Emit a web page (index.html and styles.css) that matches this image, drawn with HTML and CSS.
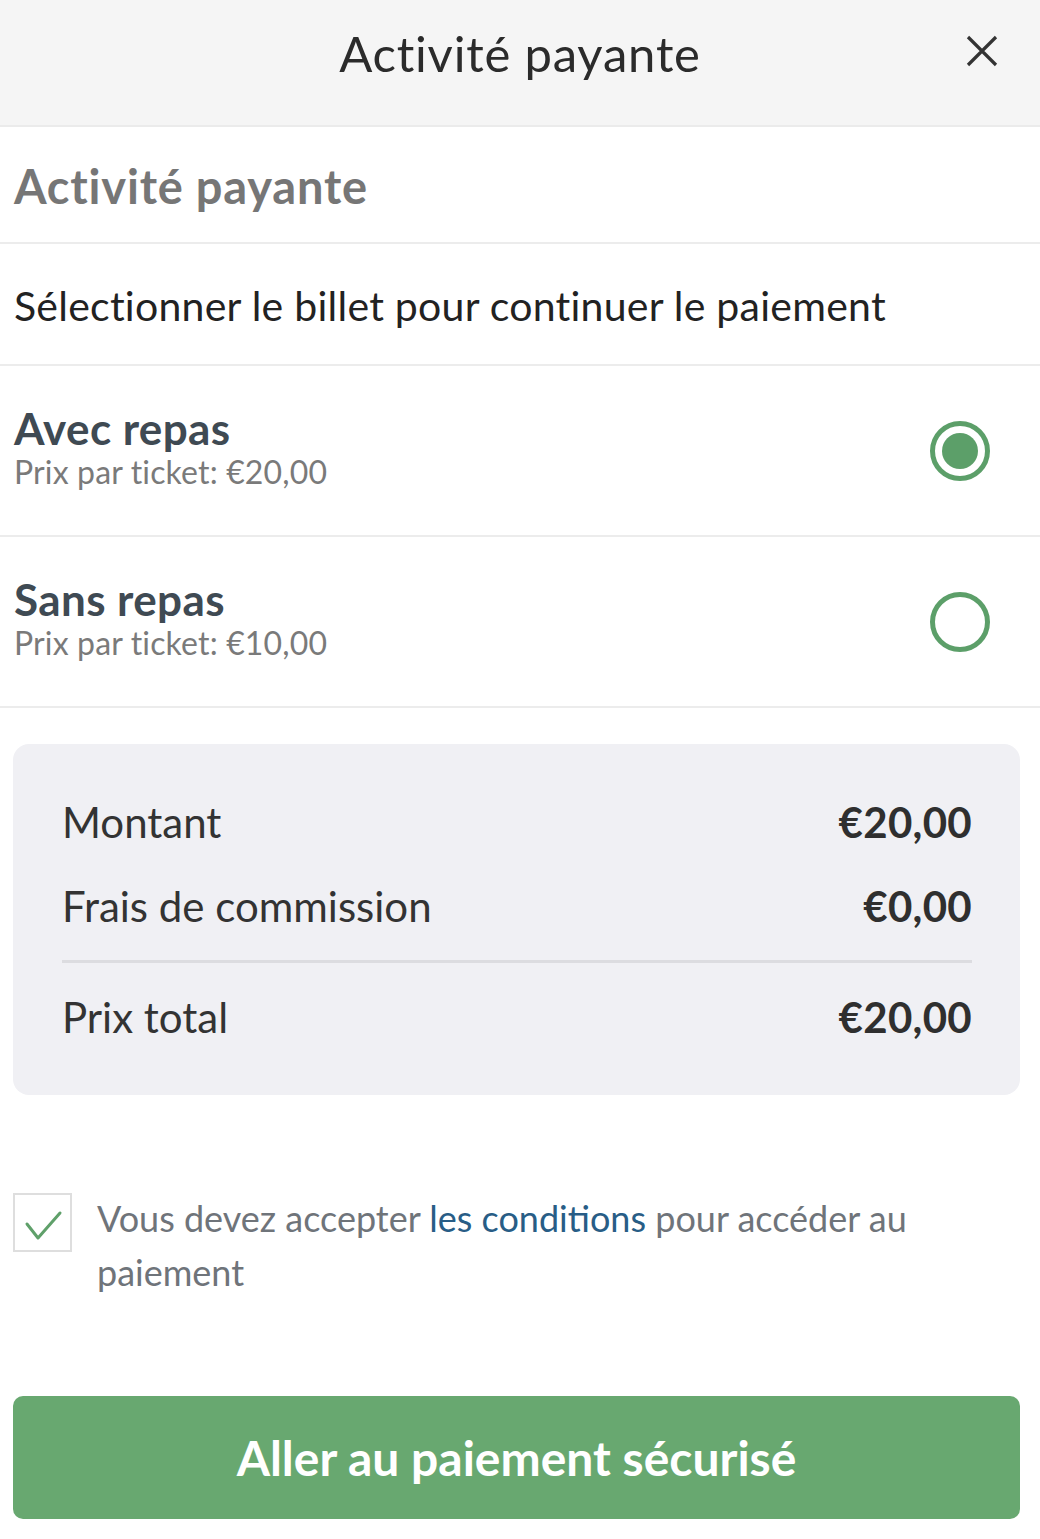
FILE: index.html
```html
<!DOCTYPE html>
<html lang="fr">
<head>
<meta charset="utf-8">
<title>Activité payante</title>
<link rel="stylesheet" href="styles.css">
</head>
<body>
<div class="page">
  <header class="topbar">
    <h1 class="topbar-title">Activité payante</h1>
    <button class="close" aria-label="Fermer">
      <svg viewBox="0 0 32 32" width="32" height="32"><path d="M2 2 L30 30 M30 2 L2 30" stroke="#333" stroke-width="3.2" fill="none"/></svg>
    </button>
  </header>

  <section class="row heading-row">
    <h2 class="section-title">Activité payante</h2>
  </section>

  <section class="row intro-row">
    <p class="intro">Sélectionner le billet pour continuer le paiement</p>
  </section>

  <label class="row option">
    <div class="option-text">
      <div class="option-name">Avec repas</div>
      <div class="option-price">Prix par ticket: €20,00</div>
    </div>
    <span class="radio checked"><span class="dot"></span></span>
  </label>

  <label class="row option">
    <div class="option-text">
      <div class="option-name">Sans repas</div>
      <div class="option-price">Prix par ticket: €10,00</div>
    </div>
    <span class="radio"></span>
  </label>

  <div class="summary">
    <div class="sum-row"><span>Montant</span><span class="amount">€20,00</span></div>
    <div class="sum-row"><span>Frais de commission</span><span class="amount">€0,00</span></div>
    <div class="sum-divider"></div>
    <div class="sum-row total"><span>Prix total</span><span class="amount">€20,00</span></div>
  </div>

  <div class="terms">
    <span class="checkbox">
      <svg viewBox="0 0 55 55" width="55" height="55"><path d="M12 29 L23 43 L45 18" stroke="#5fa06a" stroke-width="3" fill="none" stroke-linecap="round" stroke-linejoin="round"/></svg>
    </span>
    <p class="terms-text">Vous devez accepter <a class="link" href="#">les conditions</a> pour accéder au paiement</p>
  </div>

  <button class="pay">Aller au paiement sécurisé</button>
</div>
</body>
</html>
```

FILE: styles.css
```css
* { box-sizing: border-box; }
html, body { margin: 0; padding: 0; background: #fff; }
body { font-family: Lato, "Open Sans", sans-serif; width: 1040px; }

.page { display: flex; flex-direction: column; padding-bottom: 20px; }

.topbar {
  height: 127px;
  background: #f5f5f5;
  border-bottom: 2px solid #ebebeb;
  display: flex;
  align-items: center;
  justify-content: center;
  position: relative;
}
.topbar-title {
  margin: 0 0 19px 0;
  font-weight: 400;
  font-size: 49px;
  letter-spacing: 0.8px;
  color: #2b2b2b;
}
.close {
  position: absolute;
  right: 42px;
  top: 35px;
  border: 0;
  background: none;
  padding: 0;
  width: 32px;
  height: 32px;
}
.close svg { display: block; }

.row {
  border-bottom: 2px solid #ececec;
  padding: 0 50px 0 14px;
  display: flex;
  align-items: center;
}
.heading-row { height: 117px; }
.section-title {
  margin: 2px 0 0 0;
  font-size: 47px;
  letter-spacing: 0.8px;
  font-weight: 700;
  color: #767676;
}
.intro-row { height: 122px; }
.intro {
  margin: 2px 0 0 0;
  font-size: 41px;
  letter-spacing: 0.25px;
  color: #222;
}

.option { height: 171px; justify-content: space-between; }
.option-text { display: flex; flex-direction: column; margin-top: -4px; }
.option-name {
  font-size: 44px;
  letter-spacing: 0.4px;
  font-weight: 700;
  color: #3f4a53;
  line-height: 46px;
}
.option-price {
  font-size: 32px;
  letter-spacing: 0.15px;
  color: #7a7a7a;
  line-height: 42px;
}
.radio {
  width: 60px;
  height: 60px;
  border: 5px solid #5c9f69;
  border-radius: 50%;
  display: flex;
  align-items: center;
  justify-content: center;
}
.radio .dot {
  width: 36px;
  height: 36px;
  border-radius: 50%;
  background: #5c9f69;
}

.summary {
  margin: 36px 20px 0 13px;
  background: #f0f0f4;
  border-radius: 16px;
  padding: 36px 48px 36px 49px;
  display: flex;
  flex-direction: column;
}
.sum-row {
  height: 84px;
  display: flex;
  justify-content: space-between;
  align-items: center;
  font-size: 42px;
  color: #333;
}
.sum-row .amount { font-weight: 700; color: #2f2f2f; letter-spacing: 0.3px; }
.sum-divider {
  height: 3px;
  background: #dcdce0;
  margin: 12px 0 12px 0;
}

.terms {
  margin: 98px 20px 0 13px;
  display: flex;
  align-items: flex-start;
  gap: 25px;
}
.checkbox {
  flex: none;
  width: 59px;
  height: 59px;
  border: 2px solid #dedede;
  display: flex;
}
.checkbox svg { display: block; }
.terms-text {
  margin: -2px 0 0 0;
  font-size: 36px;
  line-height: 54px;
  color: #6f747a;
  max-width: 840px;
}
.link { color: #285d86; text-decoration: none; }

.pay {
  margin: 97px 20px 0 13px;
  height: 123px;
  border: 0;
  border-radius: 10px;
  background: #68a870;
  color: #fff;
  font-family: Lato, "Open Sans", sans-serif;
  font-weight: 700;
  font-size: 48px;
  padding: 0;
}
```
